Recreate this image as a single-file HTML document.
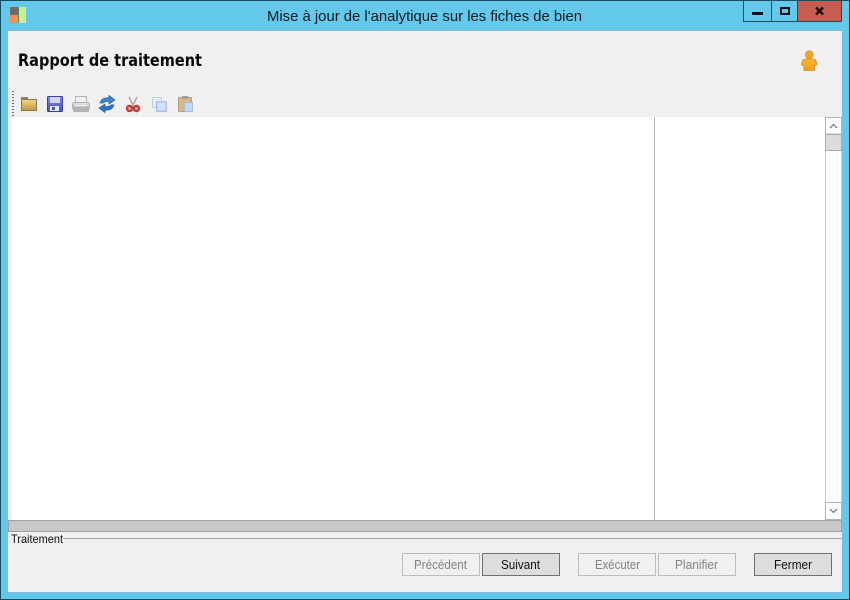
<!DOCTYPE html>
<html lang="fr"><head><meta charset="utf-8"><title>Mise à jour de l'analytique sur les fiches de bien</title>
<style>html,body{margin:0;padding:0;background:#64c8eb}svg{display:block}text{font-family:"Liberation Sans",sans-serif}</style></head>
<body>
<svg xmlns="http://www.w3.org/2000/svg" width="850" height="600" viewBox="0 0 850 600">
<defs>
<linearGradient id="fold" x1="0" y1="0" x2="0" y2="1"><stop offset="0" stop-color="#f2d68a"/><stop offset="1" stop-color="#c8963c"/></linearGradient>
<linearGradient id="save" x1="0" y1="0" x2="0" y2="1"><stop offset="0" stop-color="#8088e8"/><stop offset="1" stop-color="#4a50b8"/></linearGradient>
<linearGradient id="prn" x1="0" y1="0" x2="0" y2="1"><stop offset="0" stop-color="#e8e8e8"/><stop offset="1" stop-color="#a8a8a8"/></linearGradient>
<linearGradient id="man" x1="0" y1="0" x2="0" y2="1"><stop offset="0" stop-color="#fdb52c"/><stop offset="1" stop-color="#f49d14"/></linearGradient>
</defs>
<!-- frame -->
<rect width="850" height="600" fill="#1a4a5e"/>
<rect x="1" y="1" width="848" height="598" fill="#64c8eb"/>
<rect x="8" y="31" width="834" height="561" fill="#f0f0f0"/>
<rect x="8" y="30" width="834" height="1" fill="#8fb8c8"/>
<rect x="8" y="592" width="834" height="1" fill="#8ac0d8"/>
<!-- app icon -->
<rect x="10" y="7" width="8" height="8" fill="#6c6c6c"/>
<rect x="10" y="15" width="8" height="8" fill="#f2905c"/>
<rect x="18" y="7" width="1" height="16" fill="#5e8a60"/>
<rect x="19" y="7" width="7" height="16" fill="#c4f28e"/>
<!-- title -->
<text x="267" y="21" font-size="15" fill="#0c1a20" textLength="315" lengthAdjust="spacingAndGlyphs">Mise à jour de l'analytique sur les fiches de bien</text>
<!-- caption buttons -->
<rect x="743.5" y="0.5" width="98" height="21" fill="#64c8eb" stroke="#1f4a5c"/>
<rect x="798" y="1" width="43" height="20" fill="#c65d50"/>
<rect x="771" y="1" width="1" height="20" fill="#1f4a5c"/>
<rect x="797" y="1" width="1" height="20" fill="#1f4a5c"/>
<rect x="752" y="12" width="11" height="3" fill="#06141c"/>
<rect x="781" y="8" width="8" height="6" fill="none" stroke="#06141c" stroke-width="2"/>
<path d="M816 7.500l7 7M823 7.500l-7 7" stroke="#1a0a08" stroke-width="2.400" fill="none"/>
<!-- heading -->
<text x="18" y="66" font-size="16.500" font-weight="bold" fill="#0a0a0a" style="font-family:'DejaVu Sans',sans-serif" textLength="184" lengthAdjust="spacingAndGlyphs">Rapport de traitement</text>
<!-- user icon -->
<circle cx="809.300" cy="54.700" r="3.900" fill="#f5a31c" stroke="#c98a30" stroke-width=".7"/>
<path d="M805 59h8.500q2 .5 2.500 2l1 3.500-2.500 1.500v4.500h-10.500v-4.500l-2.500-1.500 1-3.500q.5-1.500 2.500-2z" fill="url(#man)" stroke="#c98a30" stroke-width=".8"/>
<!-- grip -->
<path d="M13 91v26" stroke="#111" stroke-width="1.200" stroke-dasharray="1 2"/>
<!-- folder -->
<rect x="21" y="97" width="7" height="3" fill="#8a8270"/>
<rect x="21.500" y="99.500" width="15" height="11" fill="url(#fold)" stroke="#8a7a50"/>
<!-- save -->
<rect x="47.500" y="96.500" width="15" height="15" rx="1" fill="url(#save)" stroke="#3a3fa0"/>
<rect x="50" y="97" width="10" height="6" fill="#d2d6f6"/>
<rect x="50" y="106" width="9" height="5" fill="#e8e8f4"/>
<rect x="52" y="107" width="3" height="3" fill="#4a50b8"/>
<!-- printer -->
<rect x="75.500" y="96.500" width="11" height="6" fill="#f0f0f0" stroke="#b4b4b4"/>
<rect x="72.500" y="102.500" width="17" height="7" rx="2" fill="url(#prn)" stroke="#b0b0b0"/>
<rect x="73" y="109" width="16" height="3" rx="1" fill="#b4b4b4"/>
<rect x="75" y="105" width="12" height="1" fill="#f4f4f4"/>
<!-- refresh -->
<path d="M100 103q2-6 9-5v-2.500l6 4.500-6 4v-2.500q-4-.5-6 1.500z" fill="#3c88c8" stroke="#1e5c98" stroke-width=".7"/>
<path d="M114 105q-2 6-9 5v2.500l-6-4.500 6-4v2.500q4 .5 6-1.500z" fill="#2e78c0" stroke="#1e5c98" stroke-width=".7"/>
<!-- scissors -->
<path d="M129 97l5 10M137 97l-5 10" stroke="#b4a8a8" stroke-width="1.600" fill="none"/>
<circle cx="129.500" cy="108.500" r="2.600" fill="#e8a0a0" stroke="#c43838" stroke-width="2.200"/>
<circle cx="136.500" cy="108.500" r="2.600" fill="#e8a0a0" stroke="#c43838" stroke-width="2.200"/>
<!-- copy -->
<rect x="152.500" y="97.500" width="9" height="10" fill="#e4ecf8" stroke="#c0cee2"/>
<rect x="156.500" y="101.500" width="10" height="10" fill="#b8d0f4" stroke="#b0c2e0"/>
<rect x="158" y="103" width="7" height="7" fill="#d4e2fa"/>
<!-- paste -->
<rect x="178.500" y="97.500" width="13" height="14" rx="1" fill="#d8b888" stroke="#b0a080"/>
<rect x="182" y="96" width="6" height="3" fill="#a0a0a0"/>
<rect x="184.500" y="102.500" width="8" height="9" fill="#c4d8f6" stroke="#a8bcdc"/>
<!-- content -->
<rect x="12" y="117" width="830" height="403" fill="#fff"/>
<rect x="654" y="117" width="1" height="403" fill="#bcbcbc"/>
<!-- scrollbar -->
<rect x="825.500" y="117.500" width="16" height="402" fill="#fff" stroke="#d0d0d0"/>
<rect x="825.500" y="117.500" width="16" height="16.500" fill="#fff" stroke="#b4b4b4"/>
<rect x="825.500" y="134.500" width="16" height="16" fill="#dcdcdc" stroke="#acacac"/>
<rect x="825.500" y="502.500" width="16" height="17" fill="#fff" stroke="#b4b4b4"/>
<path d="M830 128l3.500-3.500 3.500 3.500" stroke="#707070" stroke-width="1.200" fill="none"/>
<path d="M830 509l3.500 3.500 3.500-3.500" stroke="#707070" stroke-width="1.200" fill="none"/>
<!-- splitter -->
<rect x="8" y="520" width="834" height="12" fill="#c8c8c8"/>
<rect x="8" y="520" width="834" height="1" fill="#a0a0a0"/>
<rect x="8" y="531" width="834" height="1" fill="#a0a0a0"/>
<rect x="8" y="520" width="1" height="12" fill="#a0a0a0"/>
<rect x="841" y="520" width="1" height="12" fill="#a0a0a0"/>
<!-- group -->
<rect x="63" y="538" width="779" height="1" fill="#a8a8a8"/>
<text x="11" y="543" font-size="12" fill="#111" textLength="52" lengthAdjust="spacingAndGlyphs">Traitement</text>
<!-- buttons -->
<rect x="402.500" y="553.500" width="77" height="22" fill="#f0f0f0" stroke="#bcbcbc"/>
<text x="414" y="569" font-size="12.500" fill="#838383" textLength="53" lengthAdjust="spacingAndGlyphs">Précédent</text>
<rect x="482.500" y="553.500" width="77" height="22" fill="#dddddd" stroke="#707070"/>
<text x="501" y="569" font-size="12.500" fill="#111" textLength="39" lengthAdjust="spacingAndGlyphs">Suivant</text>
<rect x="578.500" y="553.500" width="77" height="22" fill="#f0f0f0" stroke="#bcbcbc"/>
<text x="595" y="569" font-size="12.500" fill="#838383" textLength="45" lengthAdjust="spacingAndGlyphs">Exécuter</text>
<rect x="658.500" y="553.500" width="77" height="22" fill="#f0f0f0" stroke="#bcbcbc"/>
<text x="675" y="569" font-size="12.500" fill="#838383" textLength="43" lengthAdjust="spacingAndGlyphs">Planifier</text>
<rect x="754.500" y="553.500" width="77" height="22" fill="#dddddd" stroke="#707070"/>
<text x="774" y="569" font-size="12.500" fill="#111" textLength="38" lengthAdjust="spacingAndGlyphs">Fermer</text>
</svg>
</body></html>
